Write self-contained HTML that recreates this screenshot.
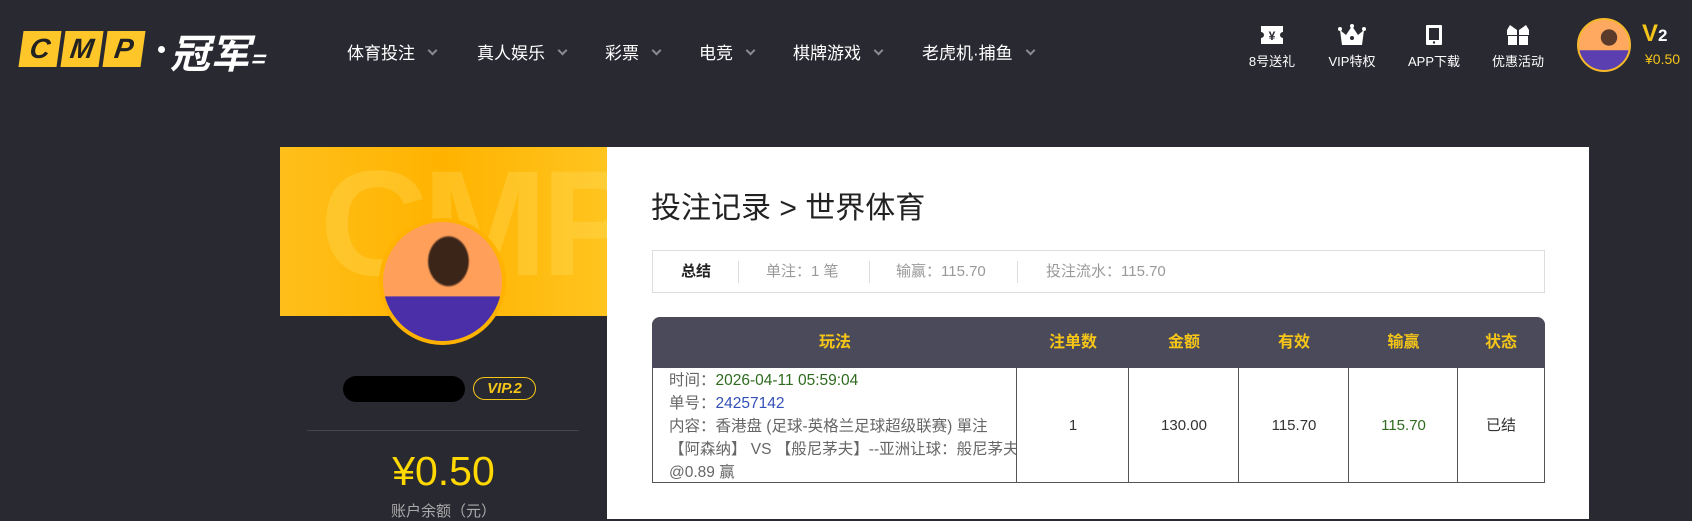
<!DOCTYPE html>
<html><head><meta charset="utf-8"><style>
*{margin:0;padding:0;box-sizing:border-box}
body{width:1692px;height:519px;overflow:hidden;background:#292932;font-family:"Liberation Sans","Noto Sans CJK SC",sans-serif;position:relative}
.a{position:absolute}
.nav{color:#fff;font-size:17px;top:39px;white-space:nowrap}
.nav i{display:inline-block;width:7px;height:7px;border-right:2.5px solid #8a8a96;border-bottom:2.5px solid #8a8a96;transform:rotate(45deg);margin-left:14px;vertical-align:5px}
.ic{top:24px;width:80px;text-align:center;color:#fff;font-size:13px}
.ic svg{display:block;margin:0 auto 5px}
.th{position:absolute;top:0;height:51px;line-height:51px;text-align:center;color:#f5c518;font-weight:bold;font-size:16px}
.td{position:absolute;top:51px;height:115px;line-height:115px;text-align:center;font-size:15px;color:#333;border-left:1px solid #555}
.lb{width:38px;height:36px;background:#ffc629;transform:skewX(-8deg);font:italic bold 28px 'Liberation Sans';color:#222;text-align:center;line-height:36px}
</style></head><body>
<div class="a" style="left:21px;top:31px;display:flex;gap:4px">
<div class="lb">C</div><div class="lb">M</div><div class="lb">P</div>
</div>
<div class="a" style="left:158px;top:46px;width:7px;height:7px;background:#fff;border-radius:50%"></div>
<div class="a" style="left:170px;top:22px;color:#fff;font:italic bold 40px 'Noto Sans CJK SC',sans-serif;letter-spacing:0px;white-space:nowrap">冠军<span style="font-size:24px">=</span></div>

<div class="a nav" style="left:347px">体育投注<i></i></div>
<div class="a nav" style="left:477px">真人娱乐<i></i></div>
<div class="a nav" style="left:605px">彩票<i></i></div>
<div class="a nav" style="left:699px">电竞<i></i></div>
<div class="a nav" style="left:793px">棋牌游戏<i></i></div>
<div class="a nav" style="left:922px">老虎机·捕鱼<i></i></div>

<div class="a ic" style="left:1232px"><svg width="24" height="22" viewBox="0 0 24 22"><path d="M1 2h22v6a3 3 0 0 0 0 6v6H1v-6a3 3 0 0 0 0-6z" fill="#fff"/><text x="12" y="16" font-size="12" font-weight="bold" text-anchor="middle" fill="#292932">¥</text></svg>8号送礼</div>
<div class="a ic" style="left:1312px"><svg width="30" height="22" viewBox="0 0 30 22"><path d="M3 6l6 5 6-9 6 9 6-5-2 15H5z" fill="#fff"/><circle cx="3" cy="5" r="2" fill="#fff"/><circle cx="27" cy="5" r="2" fill="#fff"/><circle cx="15" cy="2" r="2" fill="#fff"/><circle cx="15" cy="14" r="2" fill="#292932"/></svg>VIP特权</div>
<div class="a ic" style="left:1394px"><svg width="20" height="22" viewBox="0 0 20 22"><rect x="2" y="1" width="16" height="20" rx="1" fill="#fff"/><rect x="5" y="4" width="10" height="12" fill="#292932"/><circle cx="10" cy="18.5" r="1.2" fill="#292932"/></svg>APP下载</div>
<div class="a ic" style="left:1478px"><svg width="24" height="22" viewBox="0 0 24 22"><path d="M4 1l7 5H1z M20 1l-7 5h10z" fill="#fff"/><rect x="1" y="6" width="10" height="5" fill="#fff"/><rect x="13" y="6" width="10" height="5" fill="#fff"/><rect x="2" y="12" width="9" height="9" fill="#fff"/><rect x="13" y="12" width="9" height="9" fill="#fff"/></svg>优惠活动</div>

<div class="a" style="left:1577px;top:18px;width:54px;height:54px;border-radius:50%;border:2px solid #f5b82a;background:radial-gradient(circle at 60% 35%,#5a3a2a 0 18%,transparent 19%),linear-gradient(#ffa860 60%,#5b3fb0 61%)"></div>
<div class="a" style="left:1642px;top:20px;color:#f5c518;font:bold 24px 'Liberation Sans'">V<span style="font-size:17px;color:#fff">2</span></div>
<div class="a" style="left:1645px;top:51px;color:#f5c518;font-size:14px">¥0.50</div>

<div class="a" style="left:280px;top:147px;width:327px;height:372px;background:#292932">
<div style="height:169px;background:linear-gradient(90deg,#ffbf1a,#ffb300 50%,#ffc41f);overflow:hidden;position:relative">
<div style="position:absolute;left:40px;top:-10px;font:bold 150px 'Liberation Sans';color:rgba(255,230,120,.25);letter-spacing:-6px">CMP</div></div>
</div>
<div class="a" style="left:379px;top:218px;width:127px;height:127px;border-radius:50%;background:#ffb300;padding:4px"><div style="width:100%;height:100%;border-radius:50%;background:radial-gradient(ellipse 18% 22% at 55% 33%,#3b2418 90%,transparent 100%),linear-gradient(#ff9f5a 62%,#4a2fa8 63%)"></div></div>
<div class="a" style="left:343px;top:376px;width:122px;height:26px;background:#000;border-radius:13px"></div>
<div class="a" style="left:473px;top:377px;width:63px;height:23px;border:1px solid #f5c518;border-radius:12px;color:#f5c518;font:italic bold 15px 'Liberation Sans';text-align:center;line-height:21px">VIP.2</div>
<div class="a" style="left:307px;top:430px;width:272px;height:1px;background:#444452"></div>
<div class="a" style="left:280px;top:448px;width:327px;text-align:center;color:#ffd800;font-size:41px">¥0.50</div>
<div class="a" style="left:280px;top:500px;width:327px;text-align:center;color:#aaa;font-size:15px">账户余额（元）</div>

<div class="a" style="left:607px;top:147px;width:982px;height:372px;background:#fff"></div>
<div class="a" style="left:651px;top:183px;font-size:30px;color:#222">投注记录 &gt; 世界体育</div>
<div class="a" style="left:652px;top:250px;width:893px;height:43px;border:1px solid #ddd;font-size:15px;color:#999;line-height:41px">
<span class="a" style="left:28px;color:#222;font-weight:bold">总结</span>
<span class="a" style="left:85px;top:10px;width:1px;height:22px;background:#ddd"></span>
<span class="a" style="left:113px">单注：1 笔</span>
<span class="a" style="left:216px;top:10px;width:1px;height:22px;background:#ddd"></span>
<span class="a" style="left:243px">输赢：115.70</span>
<span class="a" style="left:364px;top:10px;width:1px;height:22px;background:#ddd"></span>
<span class="a" style="left:393px">投注流水：115.70</span>
</div>
<div class="a" style="left:652px;top:317px;width:893px;height:166px;border:1px solid #555;border-top:none;border-radius:8px 8px 0 0">
<div class="a" style="left:-1px;top:0;width:893px;height:51px;background:#4a4a5a;border-radius:8px 8px 0 0"></div>
<div class="th" style="left:0;width:364px">玩法</div>
<div class="th" style="left:364px;width:112px">注单数</div>
<div class="th" style="left:476px;width:110px">金额</div>
<div class="th" style="left:586px;width:110px">有效</div>
<div class="th" style="left:696px;width:109px">输赢</div>
<div class="th" style="left:805px;width:86px">状态</div>
<div class="a" style="left:16px;top:52px;width:347px;overflow:hidden;font-size:15.5px;line-height:23px;color:#666;white-space:nowrap">时间：<span style="color:#2e6b1e">2026-04-11 05:59:04</span><br>单号：<span style="color:#3350b8">24257142</span><br>内容：香港盘 (足球-英格兰足球超级联赛) 單注<br>【阿森纳】 VS 【般尼茅夫】--亚洲让球：般尼茅夫<br>@0.89 赢</div>
<div class="td" style="left:363px;width:113px">1</div>
<div class="td" style="left:475px;width:111px">130.00</div>
<div class="td" style="left:585px;width:111px">115.70</div>
<div class="td" style="left:695px;width:110px;color:#2e6b1e">115.70</div>
<div class="td" style="left:804px;width:87px">已结</div>
</div>
</body></html>
